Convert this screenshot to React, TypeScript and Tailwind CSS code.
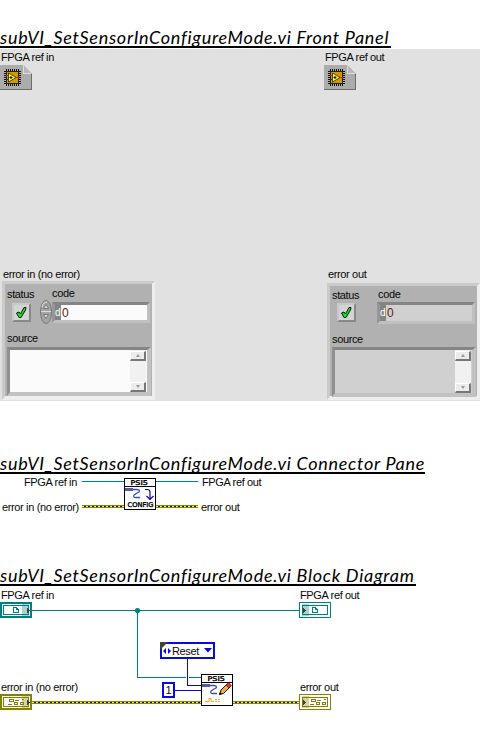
import React from "react";

function Title({ name, className }: { name: string; className: string }) {
  return (
    <h2
      className={`h-[22px] overflow-hidden whitespace-pre border-b-2 border-black font-['Lato'] text-[18px] font-normal italic leading-[22px] tracking-[.72px] text-black ${className}`}
    >
      {name}
    </h2>
  );
}

function Label({ children, className = "" }: { children: React.ReactNode; className?: string }) {
  return (
    <div
      className={`h-[14px] w-fit whitespace-nowrap font-['Liberation_Sans',sans-serif] text-[11px] leading-[14px] tracking-[-.36px] text-[#080808] ${className}`}
    >
      {children}
    </div>
  );
}

const pins = [0, 2, 4, 6, 8, 10, 12];

function FpgaRef() {
  return (
    <svg width="32" height="25" viewBox="0 0 32 25" shapeRendering="crispEdges" className="block">
      <path d="M0 0H23L32 9V25H0Z" fill="#acacac" />
      <path d="M23 0L31 8H23Z" fill="#b8b8b8" />
      <path d="M23.500 0V8.500H31" fill="none" stroke="#dddddd" />
      <path d="M0 24.500H31.500V9" fill="none" stroke="#6c6c6c" />
      <rect x="6.500" y="6.500" width="12" height="12" fill="#d09a00" stroke="#222" />
      {pins.map((p) => (
        <g key={p} fill="#111">
          <rect x={6 + p} y="4" width="1" height="2" />
          <rect x={6 + p} y="19" width="1" height="2" />
          <rect x="4" y={6 + p} width="2" height="1" />
          <rect x="19" y={6 + p} width="2" height="1" />
        </g>
      ))}
      <path d="M8.500 8V17L16 12.500Z" fill="#ffff30" stroke="#222" strokeWidth=".8" shapeRendering="auto" />
      <path d="M9.500 12.500H12.500M11 11V14" stroke="#111" shapeRendering="auto" />
      <path d="M6 10.500H8M16 12.500H19" stroke="#f02020" />
      <path d="M6 14.500H8" stroke="#2020d0" />
    </svg>
  );
}

function Check() {
  return (
    <div className="flex h-[19px] w-[19px] items-center justify-center border-2 border-b-[#888] border-l-[#c8c8c8] border-r-[#888] border-t-[#c8c8c8] bg-[#d4d4d4]">
      <svg width="13" height="13" viewBox="0 0 13 13">
        <path d="M1.500 7L4 6L5.500 8L9 1.500L11 1.500L10.500 4L6 11.500L4 11.500Z" fill="#00f020" stroke="#111" strokeWidth="1" />
      </svg>
    </div>
  );
}

function Spinner() {
  return (
    <svg width="12" height="24" viewBox="0 0 12 24" className="block">
      <ellipse cx="6" cy="12" rx="5.500" ry="11.500" fill="#a4a4a4" stroke="#777" />
      <path d="M2 7C3 3 5 2 7 2" fill="none" stroke="#eee" />
      <path d="M1 11.500H11" stroke="#ddd" />
      <path d="M3.500 8.500L6 4.500L8.500 8.500Z" fill="#ddd" stroke="#666" strokeWidth=".8" />
      <path d="M3.500 14.500L6 18.500L8.500 14.500Z" fill="#ddd" stroke="#666" strokeWidth=".8" />
    </svg>
  );
}

function CodeField({ fill, className }: { fill: string; className: string }) {
  return (
    <div
      className={`flex w-[98px] border-[3px] border-b-[#c0c0c0] border-l-[#969696] border-r-[#c0c0c0] border-t-[#858585] font-['Liberation_Sans',sans-serif] leading-[16px] ${className}`}
    >
      <div className="w-[6px] bg-[#848484] text-[10px] text-white">d</div>
      <div className={`flex-1 pl-px text-[12px] text-[#5a2808] ${fill}`}>0</div>
    </div>
  );
}

function ScrollButton({ down = false }: { down?: boolean }) {
  return (
    <div className="flex h-[10px] w-4 items-center justify-center border border-b-2 border-r-2 border-b-[#777] border-l-white border-r-[#777] border-t-white bg-[#ececec]">
      <svg width="4" height="3" viewBox="0 0 4 3">
        <path d={down ? "M0 0H4L2 3Z" : "M0 3H4L2 0Z"} fill="#999" />
      </svg>
    </div>
  );
}

function SourceBox({ fill, className }: { fill: string; className: string }) {
  return (
    <div
      className={`w-[144px] border-[3px] border-b-4 border-r-4 border-b-[#c2c2c2] border-l-[#909090] border-r-[#c2c2c2] border-t-[#858585] ${className}`}
    >
      <div className={`flex h-full justify-end pr-px ${fill}`}>
        <div className="flex w-4 flex-col justify-between bg-[#f1f1f1] pt-px">
          <ScrollButton />
          <ScrollButton down />
        </div>
      </div>
    </div>
  );
}

const clusterFrame =
  "w-[153px] border-[3px] border-t-[#cacaca] border-l-[#cacaca] border-b-[#eeeeee] border-r-[#eeeeee] border-b-4 bg-[#b1b1b1]";

function ErrorIn() {
  return (
    <div className="pl-[2px]">
      <Label className="ml-px">error in (no error)</Label>
      <div className={`${clusterFrame} h-[119px]`}>
        <div className="flex">
          <div className="w-[35px] pl-[2px] pt-[3px]">
            <Label>status</Label>
            <div className="pl-[5px] pt-[2px]"><Check /></div>
          </div>
          <div className="pt-[2px]">
            <Label className="ml-3">code</Label>
            <div className="flex"><Spinner /><CodeField fill="bg-[#fbfbfb]" className="mt-[2px] h-[21px]" /></div>
          </div>
        </div>
        <Label className="ml-[2px] mt-[7px]">source</Label>
        <SourceBox fill="bg-[#fbfbfb]" className="ml-[2px] mt-[2px] h-[49px]" />
      </div>
    </div>
  );
}

function ErrorOut() {
  return (
    <div>
      <Label className="ml-px">error out</Label>
      <div className={`${clusterFrame} mt-[2px] h-[117px]`}>
        <div className="flex">
          <div className="w-[47px] pl-[2px] pt-[2px]">
            <Label>status</Label>
            <div className="pl-[5px] pt-px"><Check /></div>
          </div>
          <div className="pt-px">
            <Label className="ml-px">code</Label>
            <CodeField fill="bg-[#d0d0d0]" className="mt-px h-[22px]" />
          </div>
        </div>
        <Label className="ml-[2px] mt-[8px]">source</Label>
        <SourceBox fill="bg-[#d0d0d0]" className="ml-[2px] mt-px h-[50px]" />
      </div>
    </div>
  );
}

function SubVi({ write = false }: { write?: boolean }) {
  return (
    <svg width="32" height="32" viewBox="0 0 32 32" className="block" shapeRendering="crispEdges">
      <rect x=".5" y=".5" width="31" height="31" fill="#fff" stroke="#000" />
      <path d="M0 8.500H32" stroke="#000" />
      <text x="6.500" y="7" fontFamily="DejaVu Sans" fontSize="6.500" stroke="#000" strokeWidth=".35" textLength="17.500" lengthAdjust="spacingAndGlyphs">PSI5</text>
      <path d="M1 10H9V12.500H1Z" fill="#5b5ba0" />
      <path d="M9 11.500H13Q16.500 12 15 14Q13 15 10 17Q9 20 12 19.500H16" fill="none" stroke="#3050b8" strokeWidth="1.300" shapeRendering="auto" />
      {write ? (
        <g shapeRendering="auto">
          <path d="M18.500 20.500L20 16L26 10L29 13L22.500 19.500Z" fill="#f0b040" stroke="#201008" strokeWidth="1" />
          <path d="M25 11L27.500 8.500L30.500 11.500L28 14Z" fill="#f02828" stroke="#601010" strokeWidth=".7" />
          <path d="M18 21L19 18L21 20Z" fill="#000" />
          <path d="M4 27.500H8V24.500H10V27.500H13M14 25.500H16M17 25.500H19M14 27.500H16M17 27.500H19" fill="none" stroke="#f5a623" strokeWidth="1" />
        </g>
      ) : (
        <>
          <path d="M21 11.500H24Q26 12 26 14V21M22.500 18L26 21.500L29.500 18" fill="none" stroke="#0808b8" strokeWidth="1.200" shapeRendering="auto" />
          <text x="3.500" y="29.300" fontFamily="DejaVu Sans" fontSize="6.500" stroke="#000" strokeWidth=".35" textLength="26" lengthAdjust="spacingAndGlyphs">CONFIG</text>
        </>
      )}
    </svg>
  );
}

function ErrorWire({ x1, x2, y }: { x1: number; x2: number; y: number }) {
  return (
    <g shapeRendering="crispEdges">
      <path d={`M${x1} ${y}H${x2}`} stroke="#8c8500" strokeWidth="3" />
      <path d={`M${x1} ${y}H${x2}`} stroke="#111" strokeWidth="1" />
      <path d={`M${x1} ${y}H${x2}`} stroke="#ffff38" strokeWidth="1" strokeDasharray="2 2" />
    </g>
  );
}

function Wires() {
  return (
    <svg width="42" height="32" className="block">
      <path d="M0 3.500H42" stroke="#008080" shapeRendering="crispEdges" />
      <ErrorWire x1={0} x2={42} y={28.5} />
    </svg>
  );
}

function Terminal({ error = false, out = false }: { error?: boolean; out?: boolean }) {
  const c = error ? "#858000" : "#008080";
  const b = out ? 1 : 2;
  const shade = out ? 3 : 22;
  return (
    <svg width="32" height="16" viewBox="0 0 32 16" className="block" shapeRendering="crispEdges">
      <rect width="32" height="16" fill={c} />
      <rect x={b} y={b} width={32 - 2 * b} height={16 - 2 * b} fill="#fff" />
      <rect x="3.500" y="3.500" width="25" height="9" fill="#fff" stroke={c} />
      <rect x={shade} y="2" width="7" height="12" fill={c} opacity=".35" />
      <path d={out ? "M4 5V12L7 8.500Z" : "M27 5V12L30 8.500Z"} fill="#404040" />
      {error ? (
        <g fill="none" stroke={c} transform={out ? "translate(3 0)" : ""}>
          <path d="M9.500 5.500H13.500V7.500H9.500ZM15 6H19M21.500 5.500H23.500M8 10H12M14.500 8.500H17.500V10.500H14.500ZM20.500 8.500H23.500V10.500H20.500Z" />
        </g>
      ) : (
        <path d="M13.500 5.500H16.500L18.500 7.500V10.500H13.500ZM16.500 5.500V7.500H18.500" fill="none" stroke={c} />
      )}
    </svg>
  );
}

function BlockDiagram() {
  return (
    <div className="relative h-[149px]">
      <svg width="340" height="149" className="absolute left-0 top-0">
        <g fill="none" shapeRendering="crispEdges">
          <path d="M32 24.500H299M137.500 24V91.500H201" stroke="#008080" />
          <path d="M186 91.500H189" stroke="#fff" />
          <path d="M187.500 72V99.500H201M175 104.500H201" stroke="#0808d8" />
        </g>
        <circle cx="137.500" cy="24.500" r="2.600" fill="#008080" />
        <ErrorWire x1={32} x2={201} y={116.5} />
        <ErrorWire x1={233} x2={299} y={116.5} />
      </svg>
      <div className="absolute left-0 top-[2px]"><Label className="ml-px">FPGA ref in</Label><Terminal /></div>
      <div className="absolute left-[299px] top-[2px]"><Label className="ml-px">FPGA ref out</Label><Terminal out /></div>
      <div className="absolute left-[160px] top-[56px] flex h-[17px] w-[55px] items-center border-2 border-[#0808e0] bg-white">
        <svg width="8" height="9" viewBox="0 0 8 9" className="ml-px mr-px shrink-0"><path d="M0 5L3 2V8ZM8 5L5 2V8Z" fill="#0808e0" /></svg>
        <Label className="tracking-[-.1px]">Reset</Label>
        <svg width="8" height="5" viewBox="0 0 8 5" className="absolute right-px top-1"><path d="M0 0H8L4 4.500Z" fill="#0808e0" /></svg>
        <svg width="8" height="8" className="absolute -left-[2px] -top-[2px]"><path d="M0 0H8L0 8Z" fill="#404040" /></svg>
      </div>
      <div className="absolute left-[162px] top-[96px] flex h-4 w-[13px] items-center justify-center border-2 border-[#0808e0] bg-white"><Label>1</Label></div>
      <div className="absolute left-[201px] top-[88px]"><SubVi write /></div>
      <div className="absolute left-0 top-[94px]"><Label className="ml-px">error in (no error)</Label><Terminal error /></div>
      <div className="absolute left-[299px] top-[94px]"><Label className="ml-px">error out</Label><Terminal error out /></div>
    </div>
  );
}

export default function App() {
  return (
    <main className="h-[735px] w-[480px] overflow-hidden bg-white pt-[26px]">
      <Title name="subVI_SetSensorInConfigureMode.vi Front Panel" className="w-[391px]" />
      <section className="mt-px flex h-[352px] flex-col justify-between bg-[#e1e1e1] pb-px pt-px">
        <div className="flex">
          <div className="w-[324px]"><Label className="mb-px ml-px">FPGA ref in</Label><FpgaRef /></div>
          <div><Label className="mb-px ml-px">FPGA ref out</Label><FpgaRef /></div>
        </div>
        <div className="flex"><div className="w-[327px]"><ErrorIn /></div><ErrorOut /></div>
      </section>
      <Title name="subVI_SetSensorInConfigureMode.vi Connector Pane" className="mt-[51px] w-[425px]" />
      <section className="flex h-9 pt-1">
        <div className="flex w-[82px] flex-col justify-between">
          <Label className="-mt-[3px] ml-6">FPGA ref in</Label>
          <Label className="-mb-[4px] ml-[2px]">error in (no error)</Label>
        </div>
        <Wires />
        <SubVi />
        <Wires />
        <div className="flex flex-col justify-between pl-[3px]">
          <Label className="-mt-[3px] ml-px">FPGA ref out</Label>
          <Label className="-mb-[4px]">error out</Label>
        </div>
      </section>
      <Title name="subVI_SetSensorInConfigureMode.vi Block Diagram" className="mt-[54px] w-[416px]" />
      <BlockDiagram />
    </main>
  );
}
